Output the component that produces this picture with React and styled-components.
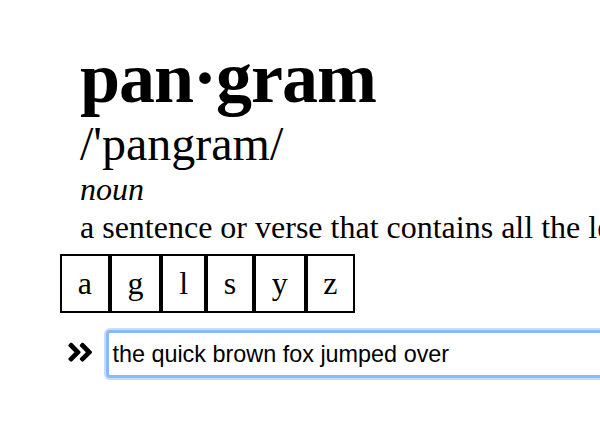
import React, { useEffect, useRef } from "react";
import styled, { createGlobalStyle } from "styled-components";

const Global = createGlobalStyle`
  html, body {
    margin: 0;
    padding: 0;
    background: #ffffff;
    overflow: hidden;
  }
  body {
    font-family: "Liberation Serif", "Times New Roman", serif;
    color: #000;
  }
`;

const Page = styled.div`
  width: 600px;
  height: 440px;
  overflow: clip;
  padding-top: 39px;
  box-sizing: border-box;
`;

const Definition = styled.div`
  margin-left: 80px;
  white-space: nowrap;
`;

const Word = styled.h1`
  margin: 0;
  font-size: 72px;
  line-height: 78px;
  font-weight: bold;
  letter-spacing: -1px;
`;

const Pronunciation = styled.div`
  font-size: 48px;
  line-height: 54px;
`;

const PartOfSpeech = styled.div`
  font-size: 32px;
  line-height: 37px;
  font-style: italic;
`;

const Meaning = styled.div`
  font-size: 32px;
  line-height: 38px;
`;

const Tiles = styled.div`
  display: flex;
  margin: 8px 0 0 60px;
`;

const Tile = styled.div`
  border: 2px solid #000;
  padding: 0 15.8px;
  font-size: 32px;
  line-height: 55px;
  text-align: center;
`;

const EntryRow = styled.div`
  display: flex;
  align-items: center;
  margin: 17px 0 0 65px;
  gap: 11px;
`;

const Chevron = styled.svg`
  width: 30.4px;
  height: 30.4px;
  flex: none;
  margin-bottom: 3px;
`;

const Entry = styled.input`
  width: 520px;
  height: 48px;
  box-sizing: border-box;
  border: 3px solid #8cb9f6;
  border-radius: 4px;
  box-shadow: 0 0 0 2px #c6dcfb;
  padding: 0 0 0 3px;
  font-family: "Liberation Sans", Arial, sans-serif;
  font-size: 23.4px;
  color: #000;
  outline: none;
  background: #fff;
  flex: none;
  caret-color: #000;
`;

const letters = ["a", "g", "l", "s", "y", "z"];
const typed = "the quick brown fox jumped over";

export default function App() {
  const inputRef = useRef(null);
  useEffect(() => {
    const el = inputRef.current;
    if (el) {
      el.focus({ preventScroll: true });
      el.setSelectionRange(typed.length, typed.length);
    }
  }, []);
  return (
    <Page>
      <Global />
      <Definition>
        <Word>pan·gram</Word>
        <Pronunciation>/'pangram/</Pronunciation>
        <PartOfSpeech>noun</PartOfSpeech>
        <Meaning>a sentence or verse that contains all the letters of the alphabet.</Meaning>
      </Definition>
      <Tiles>
        {letters.map((l) => (
          <Tile key={l}>{l}</Tile>
        ))}
      </Tiles>
      <EntryRow>
        <Chevron viewBox="0 0 512 512" aria-hidden="true">
          <g transform="translate(32 0)">
            <path
              fill="#000"
              d="M224.3 273l-136 136c-9.4 9.4-24.6 9.4-33.9 0l-22.6-22.6c-9.4-9.4-9.4-24.6 0-33.9l96.4-96.4-96.4-96.4c-9.4-9.4-9.4-24.6 0-33.9L54.3 103c9.4-9.4 24.6-9.4 33.9 0l136 136c9.5 9.4 9.5 24.6.1 34zm192-34l-136-136c-9.4-9.4-24.6-9.4-33.9 0l-22.6 22.6c-9.4 9.4-9.4 24.6 0 33.9l96.4 96.4-96.4 96.4c-9.4 9.4-9.4 24.6 0 33.9l22.6 22.6c9.4 9.4 24.6 9.4 33.9 0l136-136c9.4-9.2 9.4-24.4 0-33.8z"
            />
          </g>
        </Chevron>
        <Entry ref={inputRef} defaultValue={typed} />
      </EntryRow>
    </Page>
  );
}
